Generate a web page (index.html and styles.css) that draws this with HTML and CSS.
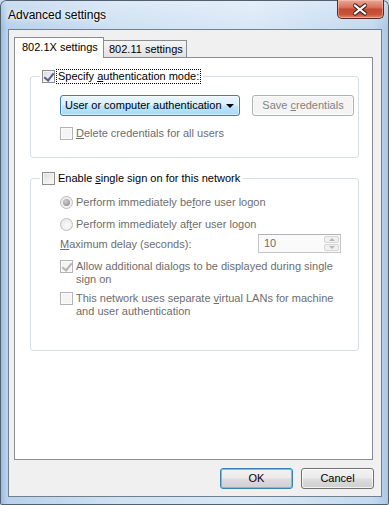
FILE: index.html
```html
<!DOCTYPE html>
<html>
<head>
<meta charset="utf-8">
<link rel="stylesheet" href="styles.css">
</head>
<body>
<div class="window">
  <div class="titlebar">
    <span class="title">Advanced settings</span>
    <span class="close">
      <svg width="47" height="19" viewBox="0 0 47 19">
        <path d="M18 5.5 L28 13.5 M28 5.5 L18 13.5" stroke="#3a1f1a" stroke-width="4.2" stroke-linecap="round" fill="none"/>
        <path d="M18 5.5 L28 13.5 M28 5.5 L18 13.5" stroke="#ffffff" stroke-width="2.2" stroke-linecap="square" fill="none"/>
      </svg>
    </span>
  </div>
  <div class="client">
    <div class="tabs">
      <div class="tab active">802.1X settings</div>
      <div class="tab">802.11 settings</div>
    </div>
    <div class="panel">
      <fieldset class="group g1">
        <legend>
          <span class="check">
            <span class="box checked"></span>
            <span class="focus">Specify <u>a</u>uthentication mode:</span>
          </span>
        </legend>
        <div class="gbody b1">
          <div class="combo-row">
            <div class="combo">User or computer authentication<span class="arrow"></span></div>
            <button class="btn disabled">Save <u>c</u>redentials</button>
          </div>
          <div class="check row-delete dis">
            <span class="box off"></span>
            <span><u>D</u>elete credentials for all users</span>
          </div>
        </div>
      </fieldset>

      <fieldset class="group g2">
        <legend>
          <span class="check">
            <span class="box"></span>
            <span class="ltext">Enable <u>s</u>ingle sign on for this network</span>
          </span>
        </legend>
        <div class="gbody b2">
          <div class="check dis">
            <span class="radio sel"></span>
            <span>Perform immediately be<u>f</u>ore user logon</span>
          </div>
          <div class="check dis r2">
            <span class="radio"></span>
            <span>Perform immediately af<u>t</u>er user logon</span>
          </div>
          <div class="delay-row dis">
            <span class="delay-label"><u>M</u>aximum delay (seconds):</span>
            <div class="spin">
              <span class="spin-val">10</span>
              <span class="spin-btns">
                <span class="sb"><span class="up"></span></span>
                <span class="sb"><span class="down"></span></span>
              </span>
            </div>
          </div>
          <div class="check dis multi r-allow">
            <span class="box checked off"></span>
            <span class="mtext">Allow additional dialogs to be displayed during single sign on</span>
          </div>
          <div class="check dis multi r-vlan">
            <span class="box off"></span>
            <span class="mtext">This network uses separate <u>v</u>irtual LANs for machine and user authentication</span>
          </div>
        </div>
      </fieldset>
    </div>
    <div class="buttons">
      <button class="btn default">OK</button>
      <button class="btn">Cancel</button>
    </div>
  </div>
</div>
</body>
</html>
```

FILE: styles.css
```css
* { box-sizing: border-box; }
html, body { margin: 0; padding: 0; background: #c9dcef; }
body {
  font-family: "Liberation Sans", Arial, sans-serif;
  font-size: 11px;
  color: #000;
}
u { text-decoration: underline; text-underline-offset: 1px; }

.window {
  width: 389px;
  height: 505px;
  display: flex;
  flex-direction: column;
  padding: 0 7px 8px 8px;
  border-radius: 6px 6px 2px 2px;
  background:
    linear-gradient(to bottom, rgba(255,255,255,0.30), rgba(255,255,255,0) 28px),
    linear-gradient(to right, #98b9dc 0, #b8d1ec 7px, #cfe1f3 30%, #d9e8f6 65%, #c3d9ef 96%, #a9c6e5 100%);
  box-shadow: inset 0 0 0 1px #50606f;
}

.titlebar {
  height: 29px;
  display: flex;
  align-items: flex-start;
  flex-shrink: 0;
}
.title {
  font-size: 12px;
  padding-top: 8px;
  line-height: 15px;
  text-shadow: 0 0 6px #fff, 0 0 3px #fff;
}
.close {
  margin-left: auto;
  margin-right: -2px;
  width: 47px;
  height: 19px;
  border: 1px solid #5a2a22;
  border-top: none;
  border-radius: 0 0 5px 5px;
  background: linear-gradient(to bottom, #e9a997 0%, #d9745e 40%, #c64a31 52%, #c9533a 80%, #dc8a6d 100%);
  box-shadow: inset 0 0 0 1px rgba(255,210,200,0.45);
  display: flex;
  align-items: center;
  justify-content: center;
}
.close svg { display: block; margin: -1px; }

.client {
  flex: 1;
  background: #f0f0f0;
  border: 1px solid #727f8d;
  padding: 7px 8px 0 5px;
  display: flex;
  flex-direction: column;
}

.tabs {
  display: flex;
  align-items: flex-end;
  height: 20px;
}
.tab {
  height: 17px;
  width: 83px;
  border: 1px solid #898c95;
  border-left: none;
  border-bottom: none;
  background: linear-gradient(to bottom, #f4f4f4, #e2e2e2);
  padding: 1px 0 0 5px;
  line-height: 15px;
  white-space: nowrap;
}
.tab.active {
  height: 21px;
  width: 90px;
  margin-bottom: -1px;
  border-left: 1px solid #898c95;
  background: #fff;
  padding: 2px 0 0 7px;
  position: relative;
  z-index: 1;
}

.panel {
  height: 403px;
  background: #fff;
  border: 1px solid #898c95;
  flex-shrink: 0;
}

.group {
  margin: 0 13px 0 15px;
  padding: 0;
  border: 1px solid #d5dfe5;
  border-radius: 3px;
  min-width: 0;
}
.g1 { margin-top: 12px; }
.g2 { margin-top: 14px; }
legend {
  margin-left: 9px;
  padding: 0 3px 0 2px;
  line-height: 13px;
}

.check {
  display: flex;
  align-items: flex-start;
  gap: 3px;
  line-height: 13px;
  white-space: nowrap;
}
legend .check { gap: 2px; }
.focus {
  outline: 1px dotted #000;
  outline-offset: 0;
  padding: 0 1px;
}
.ltext { padding-left: 1px; }
.dis { color: #6d6d6d; }

.box {
  width: 13px;
  height: 13px;
  flex-shrink: 0;
  border: 1px solid #8e8f8f;
  background: linear-gradient(135deg, #dadada 0%, #f0f0f0 60%, #fdfdfd 100%);
  box-shadow: inset 0 0 0 1px #f4f4f4;
  position: relative;
}
.box.off {
  border-color: #b4b4b4;
  background: #f4f4f4;
  box-shadow: inset 0 0 0 1px #fbfbfb;
}
.box.checked::after {
  content: "";
  position: absolute;
  left: 3px;
  top: 0px;
  width: 4px;
  height: 8px;
  border-right: 2px solid #4a5f97;
  border-bottom: 2px solid #4a5f97;
  transform: rotate(38deg);
  transform-origin: center;
}
.box.checked.off::after {
  border-color: #b5b5b5;
}

.radio {
  width: 13px;
  height: 13px;
  flex-shrink: 0;
  border-radius: 50%;
  border: 1px solid #bdbdbd;
  background: radial-gradient(circle at 60% 65%, #fafafa 0%, #e6e6e6 100%);
  position: relative;
}
.radio.sel::after {
  content: "";
  position: absolute;
  left: 2px;
  top: 2px;
  width: 7px;
  height: 7px;
  border-radius: 50%;
  background: radial-gradient(circle at 40% 35%, #d0d0d0 0%, #9a9a9a 70%, #8a8a8a 100%);
}

.gbody { padding-left: 29px; }
.b1 { padding-top: 12px; padding-bottom: 17px; }
.b2 { padding-top: 11px; padding-bottom: 32px; }

.combo-row {
  display: flex;
  align-items: flex-start;
}
.combo {
  width: 180px;
  height: 21px;
  border: 1px solid #3c7fb1;
  border-radius: 3px;
  background: linear-gradient(to bottom, #eaf6fd 0%, #d9f0fc 48%, #bee6fd 52%, #a7d9f5 100%);
  box-shadow: inset 0 0 0 1px rgba(255,255,255,0.5);
  padding-left: 4px;
  line-height: 19px;
  display: flex;
  align-items: center;
  white-space: nowrap;
}
.arrow {
  margin-left: auto;
  margin-right: 5px;
  width: 0;
  height: 0;
  border-left: 4px solid transparent;
  border-right: 4px solid transparent;
  border-top: 4px solid #000;
}
.btn {
  font-family: inherit;
  font-size: 11px;
  height: 21px;
  width: 73px;
  padding: 0;
  color: #000;
  border: 1px solid #707070;
  border-radius: 3px;
  background: linear-gradient(to bottom, #f2f2f2 0%, #ebebeb 48%, #dddddd 52%, #cfcfcf 100%);
  box-shadow: inset 0 0 0 1px rgba(255,255,255,0.7);
  line-height: 17px;
}
.btn.disabled {
  width: 102px;
  margin-left: 12px;
  color: #838383;
  border-color: #adb2b5;
  background: #f4f4f4;
  box-shadow: inset 0 0 0 1px #fcfcfc;
}
.btn.default {
  border-color: #3c7fb1;
  box-shadow: inset 0 0 0 1px #3dd5fc;
  background: linear-gradient(to bottom, #f2f2f2 0%, #ebebeb 48%, #dddddd 52%, #cfcfcf 100%);
}

.row-delete { margin-top: 11px; }
.r2 { margin-top: 9px; }

.delay-row {
  margin-top: 3px;
  height: 19px;
  display: flex;
  align-items: center;
}
.delay-label { width: 198px; }
.spin {
  width: 83px;
  height: 19px;
  border: 1px solid #c3c5c8;
  border-top-color: #b1b3b6;
  background: #fafafa;
  display: flex;
}
.spin-val {
  padding-left: 5px;
  line-height: 17px;
  flex: 1;
}
.spin-btns {
  width: 16px;
  display: flex;
  flex-direction: column;
  padding: 1px 1px 1px 0;
  gap: 1px;
}
.sb {
  flex: 1;
  border: 1px solid #d6d6d6;
  border-radius: 2px;
  background: #f0f0f0;
  display: flex;
  align-items: center;
  justify-content: center;
}
.up, .down {
  width: 0;
  height: 0;
  border-left: 3px solid transparent;
  border-right: 3px solid transparent;
}
.up { border-bottom: 3px solid #b8b8b8; }
.down { border-top: 3px solid #b8b8b8; }

.multi { white-space: normal; }
.mtext { width: 262px; }
.r-allow { margin-top: 7px; }
.r-vlan { margin-top: 6px; }

.buttons {
  margin-top: 8px;
  margin-right: -1px;
  display: flex;
  justify-content: flex-end;
  gap: 8px;
}
```
